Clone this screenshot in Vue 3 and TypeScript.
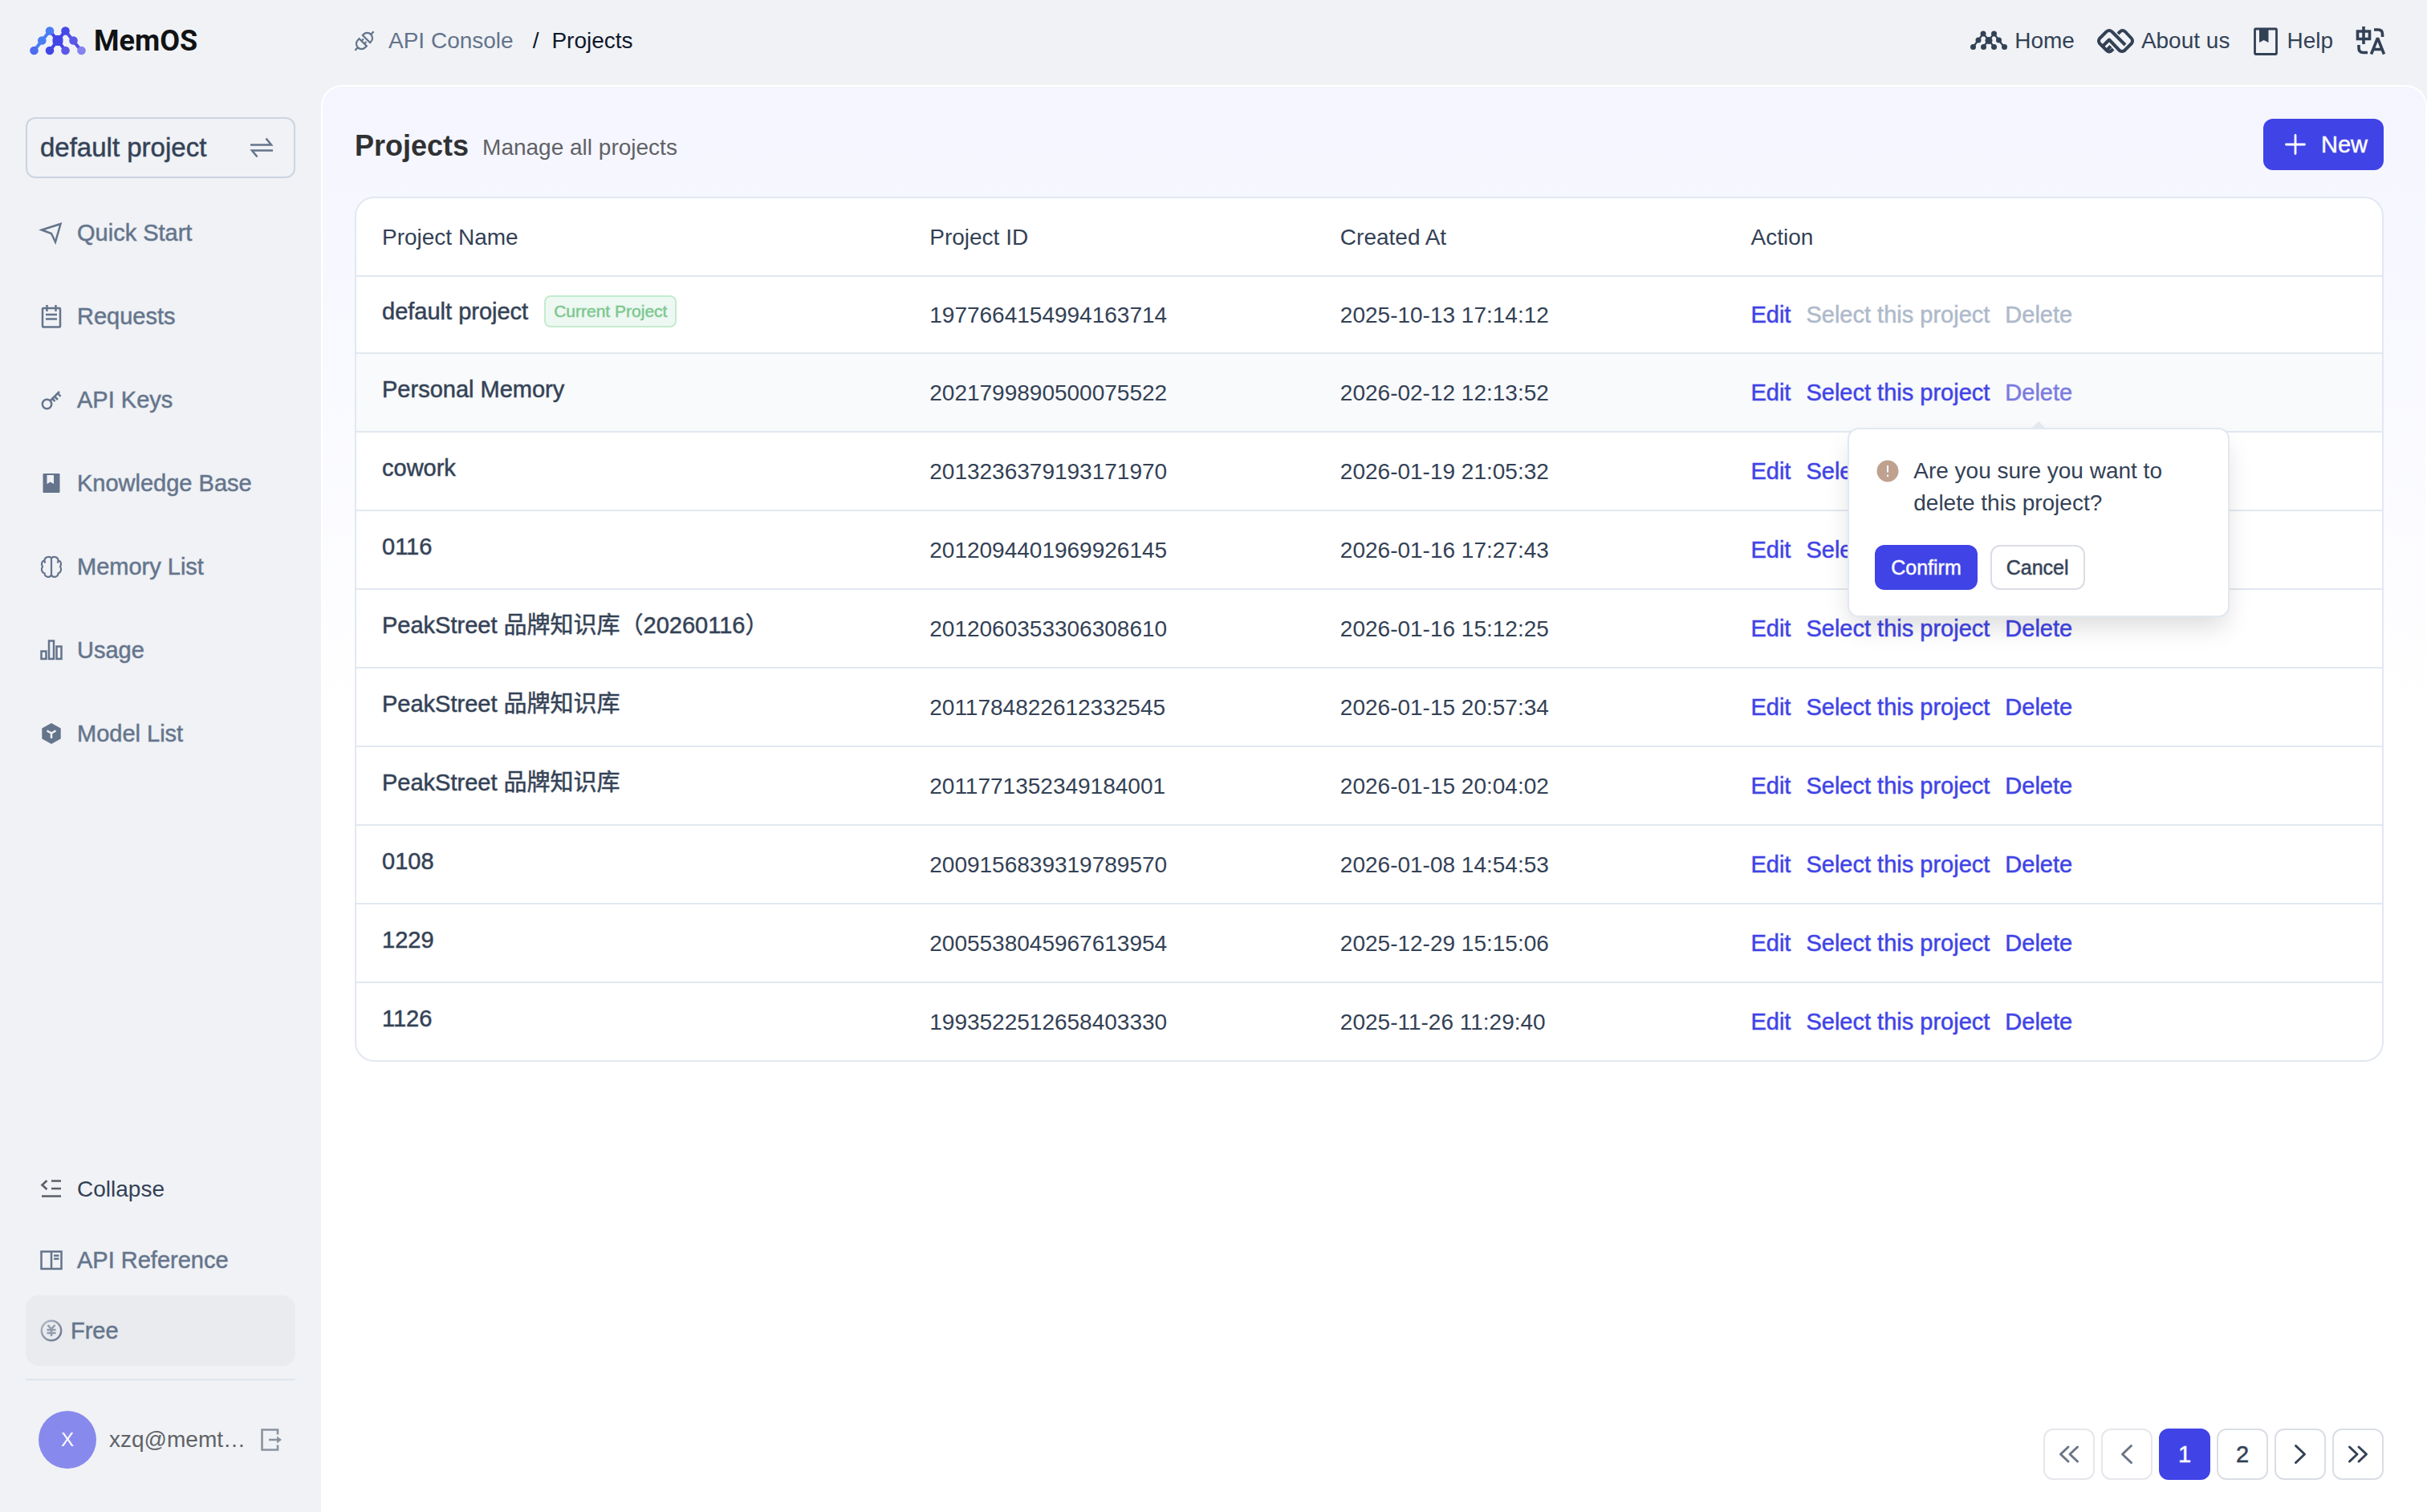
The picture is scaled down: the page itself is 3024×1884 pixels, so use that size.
<script setup lang="ts">
interface NavItem {
  label: string
  icon: string
}

interface Project {
  name: string
  id: string
  createdAt: string
  current?: boolean
}

const navItems: NavItem[] = [
  { label: 'Quick Start', icon: 'send' },
  { label: 'Requests', icon: 'notes' },
  { label: 'API Keys', icon: 'key' },
  { label: 'Knowledge Base', icon: 'book' },
  { label: 'Memory List', icon: 'brain' },
  { label: 'Usage', icon: 'chart' },
  { label: 'Model List', icon: 'model' },
]

const projects: Project[] = [
  { name: 'default project', id: '1977664154994163714', createdAt: '2025-10-13 17:14:12', current: true },
  { name: 'Personal Memory', id: '2021799890500075522', createdAt: '2026-02-12 12:13:52' },
  { name: 'cowork', id: '2013236379193171970', createdAt: '2026-01-19 21:05:32' },
  { name: '0116', id: '2012094401969926145', createdAt: '2026-01-16 17:27:43' },
  { name: 'PeakStreet 品牌知识库（20260116）', id: '2012060353306308610', createdAt: '2026-01-16 15:12:25' },
  { name: 'PeakStreet 品牌知识库', id: '2011784822612332545', createdAt: '2026-01-15 20:57:34' },
  { name: 'PeakStreet 品牌知识库', id: '2011771352349184001', createdAt: '2026-01-15 20:04:02' },
  { name: '0108', id: '2009156839319789570', createdAt: '2026-01-08 14:54:53' },
  { name: '1229', id: '2005538045967613954', createdAt: '2025-12-29 15:15:06' },
  { name: '1126', id: '1993522512658403330', createdAt: '2025-11-26 11:29:40' },
]

const pendingDeleteId = '2021799890500075522'
</script>

<template>
  <div class="app">
    <aside class="sidebar">
      <a class="brand" href="#">
        <svg width="70" height="36" viewBox="0 0 70 36" aria-hidden="true">
          <g fill="none" stroke-width="4">
            <path d="M25 5.500 35 17.500 44.500 5.500M35 17.500 25 30M35 17.500 44.500 30" stroke="#4246e6" />
            <path d="M25 5.500 5.500 30" stroke="#4b7df3" />
            <path d="m44.500 5.500 19.500 24.500" stroke="#5250e7" />
          </g>
          <rect x="28.500" y="11" width="13" height="13" rx="5" fill="#4246e6" />
          <circle cx="25" cy="5.500" r="5.300" fill="#4b7df3" />
          <circle cx="15.300" cy="17.500" r="5.300" fill="#4b7df3" />
          <circle cx="5.500" cy="30" r="5.300" fill="#4d6cf0" />
          <circle cx="25" cy="30" r="5.300" fill="#4246e6" />
          <circle cx="44.500" cy="30" r="5.300" fill="#5a57e9" />
          <circle cx="44.500" cy="5.500" r="5.300" fill="#4549e6" />
          <circle cx="54.500" cy="17.500" r="5.300" fill="#5a58e8" />
          <circle cx="64.500" cy="30" r="5.300" fill="#8583ef" />
        </svg>
        <span>MemOS</span>
      </a>

      <button class="switcher" type="button">
        <span class="medium-lg">default project</span>
        <svg width="32" height="32" viewBox="0 0 32 32" fill="none" stroke="#64748b" stroke-width="2.500" aria-hidden="true">
          <path d="M2 12.500h26l-6.500-8M30 19.500H4l6.500 8" />
        </svg>
      </button>

      <nav class="nav" aria-label="Main">
        <a v-for="item in navItems" :key="item.label" class="nav-item medium" href="#">
          <svg width="32" height="32" viewBox="0 0 32 32" fill="none" stroke="currentColor" stroke-width="2.500" aria-hidden="true">
            <path v-if="item.icon === 'send'" d="M4 12.500 27.500 5 21 27.500 16 17z" />
            <g v-else-if="item.icon === 'notes'">
              <rect x="5" y="6" width="22" height="23.500" rx="1" />
              <path d="M10.500 2v8M21.500 2v8M9 14h14M9 19.500h14" />
            </g>
            <g v-else-if="item.icon === 'key'">
              <circle cx="10.500" cy="21.500" r="5.700" />
              <path d="M14.500 17.500 26 6M20 12l4 4M24 8l3.500 4M17 14.500l3.500 3.500" />
            </g>
            <g v-else-if="item.icon === 'book'" stroke="none" fill="currentColor">
              <path fill-rule="evenodd" d="M6.500 4h19a1 1 0 0 1 1 1v22a1 1 0 0 1-1 1h-19a1 1 0 0 1-1-1V5a1 1 0 0 1 1-1zM10.500 6v11l4.300-2.500 4.200 2.500V6z" />
            </g>
            <g v-else-if="item.icon === 'brain'" stroke-width="2.200">
              <path d="M16 6v20c-1 4-8 4-8.500-1.500C3.500 23 3 19 5 16c-2-3-1-7 2.500-8 .5-5 7.500-5 8.500-2zM16 6v20c1 4 8 4 8.500-1.500C28.500 23 29 19 27 16c2-3 1-7-2.500-8-.5-5-7.500-5-8.500-2zM7.500 8c-.2 1.500.2 2.500 1 3.500M24.500 8c.2 1.500-.2 2.500-1 3.500" />
            </g>
            <g v-else-if="item.icon === 'chart'">
              <path d="M3.500 17.500h6V27h-6zM13 4.500h6V27h-6zM22.500 11.500h6V27h-6z" />
            </g>
            <g v-else>
              <path d="M16 3 27.700 9.500v13L16 29 4.300 22.500v-13z" fill="currentColor" stroke="none" />
              <path d="M10.500 12.500 16 15.500l5.500-3M16 15.500V22" stroke="#f0f2f6" />
            </g>
          </svg>
          <span>{{ item.label }}</span>
        </a>
      </nav>

      <div class="sidebar-foot">
        <button class="nav-item collapse" type="button">
          <svg width="32" height="32" viewBox="0 0 32 32" fill="none" stroke="#5b5f69" stroke-width="2.600" aria-hidden="true">
            <path d="M10.500 5 4.500 10.500l6 5.500M16 5.500h12M16 15h12M4 24.500h24" />
          </svg>
          <span>Collapse</span>
        </button>
        <a class="nav-item medium" href="#">
          <svg width="32" height="32" viewBox="0 0 32 32" fill="none" stroke="currentColor" stroke-width="2.500" aria-hidden="true">
            <path d="M3.500 5.500h25v21.500h-25zM16 5.500V27M19 10.500h6.500M19 14.500h6.500" />
          </svg>
          <span>API Reference</span>
        </a>
        <a class="nav-item plan medium" href="#">
          <svg width="32" height="32" viewBox="0 0 32 32" fill="none" stroke-width="2.500" aria-hidden="true">
            <defs>
              <linearGradient id="coin" x1="0" y1="0" x2="1" y2="1">
                <stop offset="0" stop-color="#b4bcc8" />
                <stop offset="1" stop-color="#66728a" />
              </linearGradient>
            </defs>
            <circle cx="16" cy="16" r="12.200" stroke="url(#coin)" />
            <path d="m11.500 9 4.500 5 4.500-5M10.500 15h11M10.500 19h11M16 14v9" stroke="#929cac" />
          </svg>
          <span>Free</span>
        </a>
        <hr />
        <div class="account">
          <span class="avatar">X</span>
          <span class="email">xzq@memtensor.cn</span>
          <button class="icon-button" type="button" aria-label="Log out">
            <svg width="32" height="32" viewBox="0 0 32 32" fill="none" stroke="#8a939f" stroke-width="2.600" aria-hidden="true">
              <path d="M24 9.500V3.500H4.500v25H24v-6M13 16h12" />
              <path d="m23 11.500 6 4.500-6 4.500z" fill="#8a939f" stroke="none" />
            </svg>
          </button>
        </div>
      </div>
    </aside>

    <div class="page">
      <header class="topbar">
        <nav class="crumbs" aria-label="Breadcrumb">
          <svg width="28" height="28" viewBox="0 0 28 28" fill="none" stroke="#64748b" stroke-width="2.200" aria-hidden="true">
            <g transform="rotate(-45 14 14)">
              <path d="M11.500 7.500v13H9a6.500 6.500 0 0 1 0-13zM17.500 7.500v13H19a6.500 6.500 0 0 0 0-13zM11.500 11.500h3.500M11.500 16.500h3.500M2.500 14h-5M25.500 14h5" />
            </g>
          </svg>
          <a href="#">API Console</a>
          <span class="slash">/</span>
          <span class="here">Projects</span>
        </nav>
        <nav class="links" aria-label="Site">
          <a href="#">
            <svg width="48" height="40" viewBox="0 0 48 40" fill="currentColor" stroke="currentColor" aria-hidden="true">
              <path d="M17 11 4.500 27.500M17 11l7 8 6.500-8L43 27.500M24 19l-7 8.500M24 19l6.500 8.500" fill="none" stroke-width="2.200" />
              <g stroke="none">
                <circle cx="17" cy="11" r="3.500" />
                <circle cx="30.500" cy="11" r="3.500" />
                <circle cx="11" cy="19" r="3.500" />
                <circle cx="24" cy="19.500" r="4.500" />
                <circle cx="36.500" cy="19" r="3.500" />
                <circle cx="4.500" cy="27.500" r="3.500" />
                <circle cx="17.500" cy="27.500" r="3.500" />
                <circle cx="30.500" cy="27.500" r="3.500" />
                <circle cx="43.500" cy="27.500" r="3.500" />
              </g>
            </svg>
            <span>Home</span>
          </a>
          <a href="#">
            <svg width="48" height="40" viewBox="0 0 48 40" fill="none" stroke="currentColor" stroke-width="4" stroke-linejoin="round" aria-hidden="true">
              <path d="m21 30-2 2q-3 3-6 0l-9-9q-2-3 0-6l8.500-8.500q3.500-3 7 0L36 25" />
              <path d="m27 11 2.500-2.500q3-3 6.500 0l8 8.500q2 3 0 6l-9 9q-3 2-6 0L16 18.500 7.500 27M13 31.500l5-5" />
            </svg>
            <span>About us</span>
          </a>
          <a href="#">
            <svg width="36" height="40" viewBox="0 0 36 40" aria-hidden="true">
              <rect x="4.500" y="5" width="27" height="31.500" rx="1" fill="none" stroke="currentColor" stroke-width="2.800" />
              <path d="M10 5h11.500v17L15.700 19 10 22z" fill="currentColor" />
            </svg>
            <span>Help</span>
          </a>
          <button class="icon-button" type="button" aria-label="Switch language">
            <svg width="40" height="40" viewBox="0 0 40 40" fill="none" stroke="#334155" stroke-width="3.600" aria-hidden="true">
              <path d="M3.500 8h15v9.500h-15zM11 2v22M24 6h5q5.500 0 5.500 5.500V15M5 25v4q0 5.500 5.500 5.500H16" />
              <path d="m20.500 36.500 7.500-19h1l7.500 19M23.500 30.500h10" />
            </svg>
          </button>
        </nav>
      </header>

      <main class="panel">
        <div class="panel-head">
          <h1>Projects</h1>
          <p>Manage all projects</p>
          <button class="primary new medium" type="button">
            <svg width="32" height="32" viewBox="0 0 32 32" fill="none" stroke="#fff" stroke-width="2.800" stroke-linecap="round" aria-hidden="true">
              <path d="M16 4.500v23M4.500 16h23" />
            </svg>
            <span>New</span>
          </button>
        </div>

        <div class="table-card">
          <table>
            <thead>
              <tr>
                <th class="col-name" scope="col">Project Name</th>
                <th class="col-id" scope="col">Project ID</th>
                <th class="col-date" scope="col">Created At</th>
                <th scope="col">Action</th>
              </tr>
            </thead>
            <tbody>
              <tr
                v-for="project in projects"
                :key="project.id"
                :class="{ current: project.current, active: project.id === pendingDeleteId }"
              >
                <td class="name medium">
                  <div class="name-line">
                    <span>{{ project.name }}</span>
                    <span v-if="project.current" class="badge">Current Project</span>
                  </div>
                </td>
                <td class="value">{{ project.id }}</td>
                <td class="value">{{ project.createdAt }}</td>
                <td>
                  <div class="actions">
                    <button class="link medium" type="button">Edit</button>
                    <button class="link medium" type="button" :disabled="project.current">Select this project</button>
                    <div class="delete">
                      <button class="link medium" type="button" :disabled="project.current">Delete</button>
                      <div v-if="project.id === pendingDeleteId" class="popover" role="dialog" aria-label="Delete project">
                        <div class="question">
                          <svg width="28" height="28" viewBox="0 0 28 28" aria-hidden="true">
                            <circle cx="14" cy="14" r="13.500" fill="#bfa18f" />
                            <path d="M14 7v8.500M14 18.500v2.500" stroke="#fff" stroke-width="2" />
                          </svg>
                          <p>Are you sure you want to delete this project?</p>
                        </div>
                        <div class="choices">
                          <button class="primary" type="button">Confirm</button>
                          <button class="secondary" type="button">Cancel</button>
                        </div>
                      </div>
                    </div>
                  </div>
                </td>
              </tr>
            </tbody>
          </table>
        </div>

        <nav class="pager" aria-label="Pagination">
          <button type="button" disabled aria-label="First page">
            <svg width="32" height="32" viewBox="0 0 32 32" aria-hidden="true"><path d="M15 7 5.500 16l9.500 9M26.500 7 17 16l9.500 9" /></svg>
          </button>
          <button type="button" disabled aria-label="Previous page">
            <svg width="32" height="32" viewBox="0 0 32 32" aria-hidden="true"><path d="M21.500 5.500 10.500 16l11 10.500" /></svg>
          </button>
          <button class="on medium" type="button" aria-current="page">1</button>
          <button class="medium" type="button">2</button>
          <button type="button" aria-label="Next page">
            <svg width="32" height="32" viewBox="0 0 32 32" aria-hidden="true"><path d="M10.500 5.500 21.500 16l-11 10.500" /></svg>
          </button>
          <button type="button" aria-label="Last page">
            <svg width="32" height="32" viewBox="0 0 32 32" aria-hidden="true"><path d="M5.500 7 15 16l-9.500 9M17 7l9.500 9-9.500 9" /></svg>
          </button>
        </nav>
      </main>
    </div>
  </div>
</template>

<style>
body {
  background: #f0f2f6;
}
</style>

<style scoped>
* {
  box-sizing: border-box;
}

.app {
  display: flex;
  min-height: 100vh;
  background: #f0f2f6;
  color: #334155;
  font-family: "Liberation Sans", "Noto Sans CJK SC", Arial, sans-serif;
  font-size: 28px;
  line-height: 40px;
}

a {
  color: inherit;
  text-decoration: none;
}

button {
  padding: 0;
  border: 0;
  background: none;
  color: inherit;
  font: inherit;
}

svg {
  display: block;
  flex: none;
}

/* Medium weight: a half-strength outline over the regular cut */
.medium,
.medium *,
.medium-lg,
.choices button {
  -webkit-text-stroke: 1px color-mix(in srgb, currentColor 50%, transparent);
}

.medium {
  font-size: 29px;
}

.medium-lg {
  font-size: 33px;
}

/* Sidebar */
.sidebar {
  display: flex;
  flex: none;
  flex-direction: column;
  width: 400px;
  padding: 0 32px;
}

.brand {
  display: flex;
  align-items: center;
  gap: 10px;
  height: 102px;
  margin-bottom: 44px;
  padding-left: 5px;
  color: #111213;
  font-family: Roboto, sans-serif;
  font-size: 36px;
  font-weight: 700;
}

.switcher {
  display: flex;
  align-items: center;
  justify-content: space-between;
  height: 76px;
  padding: 0 24px 0 16px;
  border: 2px solid #cbd5e1;
  border-radius: 12px;
}

.nav {
  display: flex;
  flex-direction: column;
  gap: 16px;
  margin-top: 24px;
}

.nav-item {
  display: flex;
  align-items: center;
  gap: 16px;
  width: 100%;
  height: 88px;
  padding: 0 16px;
  border-radius: 16px;
  color: #64748b;
}

.nav-item.collapse {
  color: #334155;
}

.nav-item.plan {
  gap: 8px;
  background: #e9ebee;
}

.sidebar-foot {
  margin-top: auto;
}

hr {
  height: 2px;
  margin: 16px 0 0;
  border: 0;
  background: #dee6ed;
}

.account {
  display: flex;
  align-items: center;
  gap: 16px;
  margin: 38px 0 54px;
  padding: 0 14px 0 16px;
}

.avatar {
  flex: none;
  width: 72px;
  border-radius: 50%;
  background: #8789ec;
  color: #fff;
  font-size: 24px;
  line-height: 72px;
  text-align: center;
}

.email {
  flex: 1;
  overflow: hidden;
  color: #606266;
  text-overflow: ellipsis;
  white-space: nowrap;
}

/* Header */
.page {
  display: flex;
  flex: 1;
  flex-direction: column;
  min-width: 0;
}

.topbar {
  display: flex;
  align-items: center;
  justify-content: space-between;
  height: 106px;
  padding: 0 50px 4px 40px;
}

.crumbs {
  display: flex;
  align-items: center;
  color: #64748b;
}

.crumbs a {
  margin-left: 16px;
}

.slash,
.here {
  color: #0f172a;
}

.slash {
  margin: 0 16px 0 24px;
}

.links,
.links a {
  display: flex;
  align-items: center;
}

.links {
  gap: 27px;
}

.links a {
  gap: 8px;
}

/* Content panel */
.panel {
  display: flex;
  flex: 1;
  flex-direction: column;
  padding: 40px 52px 40px 40px;
  border: 2px solid #fff;
  border-bottom: 0;
  border-radius: 26px 26px 0 0;
  background: linear-gradient(180deg, #f4f5ff, #fff 45%);
}

.panel-head {
  display: flex;
  align-items: center;
  gap: 17px;
}

h1,
p {
  margin: 0;
}

h1 {
  padding-top: 3px;
  color: #303133;
  font-size: 36px;
  line-height: 40px;
}

.panel-head p {
  padding-top: 8px;
  color: #606266;
}

.primary {
  border-radius: 12px;
  background: #4043e5;
  color: #fff;
}

.new {
  display: flex;
  align-items: center;
  gap: 16px;
  height: 64px;
  margin-left: auto;
  padding: 0 20px 0 24px;
}

.table-card {
  margin-top: 33px;
  border: 2px solid #e2e8f0;
  border-radius: 24px;
  background: #fff;
}

table {
  width: 100%;
  border-spacing: 0;
  table-layout: fixed;
}

.col-name {
  width: 27.03%;
}

.col-id,
.col-date {
  width: 20.27%;
}

th,
td {
  height: 98px;
  padding: 0 32px;
  border-bottom: 2px solid #e2e8f0;
  font-weight: 400;
  text-align: left;
  vertical-align: middle;
  white-space: nowrap;
}

th,
.value {
  padding-top: 2px;
}

.current td,
tbody tr:last-child > td {
  height: 96px;
}

tbody tr:last-child > td {
  border-bottom: 0;
}

.active td {
  background: #f9fafc;
}

.name {
  padding-bottom: 8px;
}

.name-line,
.actions {
  display: flex;
  align-items: center;
}

.name-line {
  gap: 20px;
  height: 40px;
}

.badge {
  padding: 0 10px;
  border: 2px solid #c3ebcf;
  border-radius: 8px;
  background: #eef8f2;
  color: #7bc78f;
  font-size: 21px;
  line-height: 36px;
}

.actions {
  gap: 19px;
}

.link {
  color: #4043e5;
}

.link:disabled {
  color: #aeb9ca;
}

.delete {
  position: relative;
  display: flex;
}

.active .delete > .link {
  color: #7b7ae0;
}

.popover {
  position: absolute;
  z-index: 1;
  top: calc(100% + 24px);
  left: 50%;
  width: 476px;
  padding: 32px;
  border: 2px solid #e2e8f0;
  border-radius: 14px;
  background: #fff;
  box-shadow: 0 16px 32px -4px rgba(0, 0, 0, 0.14);
  transform: translateX(-50%);
  white-space: normal;
}

.popover::before {
  position: absolute;
  bottom: 100%;
  left: 50%;
  margin: 0 0 2px -8px;
  border: 8px solid transparent;
  border-top: 0;
  border-bottom-color: #e2e8f0;
  content: "";
}

.question {
  display: flex;
  gap: 18px;
  padding-left: 2px;
}

.question svg {
  margin-top: 6px;
}

.choices {
  display: flex;
  gap: 16px;
  margin-top: 32px;
}

.choices button {
  height: 56px;
  padding: 0 20px;
  font-size: 25px;
}

.choices .secondary {
  padding: 0 18px;
  border: 2px solid #dadde5;
  border-radius: 12px;
}

/* Pagination */
.pager {
  display: flex;
  gap: 8px;
  justify-content: flex-end;
  margin-top: auto;
}

.pager button {
  display: flex;
  align-items: center;
  justify-content: center;
  width: 64px;
  height: 64px;
  border: 2px solid #dadee4;
  border-radius: 12px;
  background: #fff;
}

.pager .on {
  border-color: #4043e5;
  background: #4043e5;
  color: #fff;
}

.pager button:disabled {
  border-color: #e6e7ec;
  color: #6b7587;
}

.pager path {
  fill: none;
  stroke: currentColor;
  stroke-linecap: round;
  stroke-linejoin: round;
  stroke-width: 3;
}
</style>
